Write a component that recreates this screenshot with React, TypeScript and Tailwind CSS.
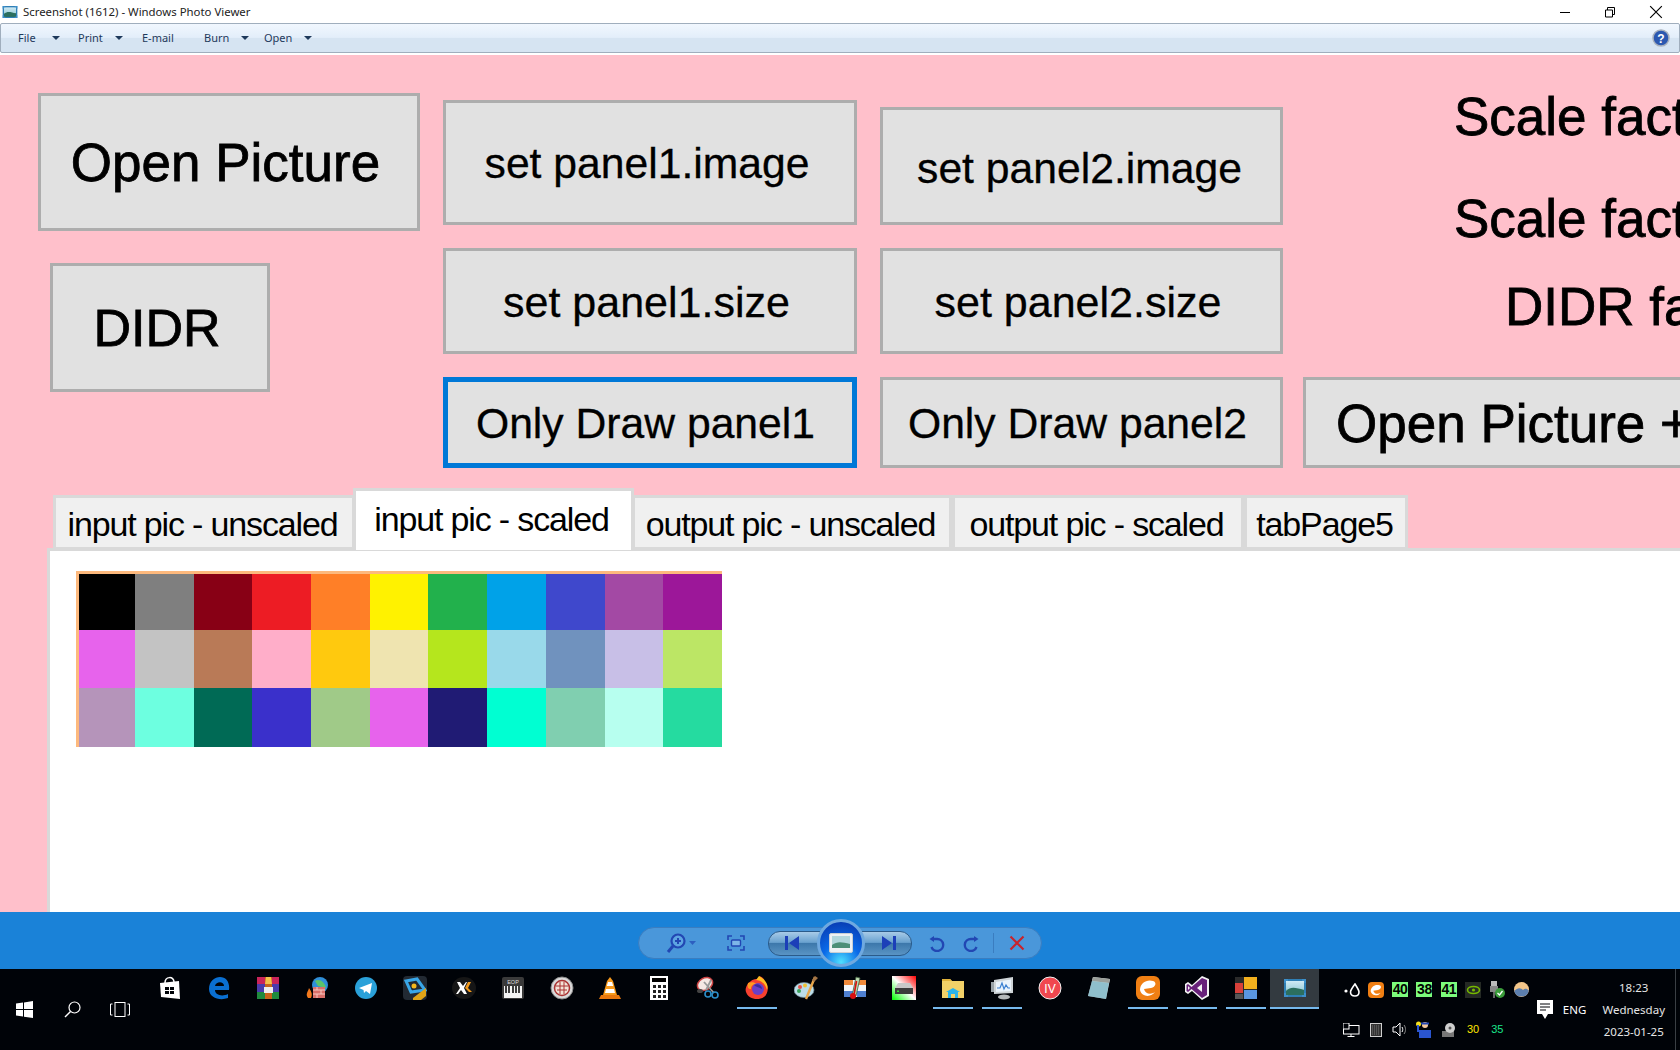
import React from "react";

const winFont = "font-['Noto_Sans','Open_Sans',sans-serif]";
const btnCore =
  "flex items-center justify-center shrink-0 bg-[#e1e1e1] text-black font-['Liberation_Sans',sans-serif] leading-none whitespace-nowrap";
const btnBase = `${btnCore} border-[3px] border-[#adadad]`;
const strokeBig = "[-webkit-text-stroke:0.8px_black]";
const strokeMid = "[-webkit-text-stroke:0.3px_black]";

const colors = [
  ["#000000", "#7f7f7f", "#880015", "#ed1c24", "#ff7f27", "#fff200", "#22b14c", "#00a2e8", "#3f48cc", "#a349a4", "#9c1799"],
  ["#e763ec", "#c3c3c3", "#b97a57", "#ffaec9", "#ffc90e", "#efe4b0", "#b5e61d", "#99d9ea", "#7092be", "#c8bfe7", "#bce665"],
  ["#b594ba", "#6dffe0", "#006a55", "#3a30cb", "#a0ca88", "#e763ec", "#201b74", "#00ffd2", "#80cfb0", "#b7ffef", "#25dba0"],
];

function PhotoIcon({ s = 16 }: { s?: number }) {
  return (
    <svg width={s} height={s} viewBox="0 0 24 24">
      <defs>
        <linearGradient id="sky" x1="0" y1="0" x2="0" y2="1">
          <stop offset="0" stopColor="#cfeaf5" />
          <stop offset="0.55" stopColor="#a8d5e0" />
          <stop offset="1" stopColor="#1f6a5c" />
        </linearGradient>
      </defs>
      <rect x="1" y="3" width="22" height="18" fill="#2f7fb5" />
      <rect x="3" y="5" width="18" height="14" fill="url(#sky)" />
      <path d="M3 15 C8 10 13 12 21 14 V19 H3Z" fill="#2c6f5f" />
      <path d="M1 3h4v2H3v2H1zM19 3h4v4h-2V5h-2zM1 17h2v2h2v2H1zM21 17h2v4h-4v-2h2z" fill="#3d8fc9" />
    </svg>
  );
}

const tile = (children: React.ReactNode, s = 24) => (
  <svg width={s} height={s} viewBox="0 0 24 24">
    {children}
  </svg>
);

const taskIcons: { icon: React.ReactNode; line?: boolean; active?: boolean }[] = [
  {
    icon: tile(
      <>
        <path d="M2 7 L21 5 L22 23 L3 21Z" fill="#fff" />
        <path d="M7 7 C7 0 16 0 16 6" fill="none" stroke="#fff" strokeWidth="1.5" />
        <path d="M7 11h4v3H7zM12 11h4v3h-4zM7 15h4v3H7zM12 15h4v3h-4z" fill="#000308" />
      </>
    ),
  },
  {
    icon: tile(
      <path
        d="M2 13 C2 5 8 1 13 1 C19 1 23 6 22 14 H8 C8 19 15 21 21 18 V22 C13 25 2 22 2 13Z M8 10 H17 C17 5 9 5 8 10Z"
        fill="#0a6fd1"
        fillRule="evenodd"
      />
    ),
  },
  {
    icon: tile(
      <>
        <rect x="1" y="1" width="22" height="7" fill="#c9245a" />
        <rect x="1" y="8" width="22" height="8" fill="#4a3bad" />
        <rect x="1" y="16" width="22" height="7" fill="#1f8a3e" />
        <rect x="9" y="1" width="7" height="22" fill="#c8641a" />
        <rect x="8" y="11" width="9" height="6" fill="#eee" />
        <path d="M10 1h5l1 7H9z" fill="#f2c14a" />
      </>
    ),
  },
  {
    icon: tile(
      <>
        <circle cx="15" cy="9" r="8" fill="#2f8fd8" />
        <path d="M10 5 C14 2 20 6 21 12 L13 10Z" fill="#5bc36a" />
        <rect x="8" y="11" width="12" height="11" fill="#d9706a" />
        <path d="M8 14h12M8 18h12M12 11v3M16 14v4M12 18v4" stroke="#f5c7c0" strokeWidth="1" />
        <path d="M3 22 C0 18 3 16 4 12 C6 15 8 18 6 22Z" fill="#f2791c" />
      </>
    ),
  },
  {
    icon: tile(
      <>
        <circle cx="12" cy="12" r="11" fill="#2aa1d9" />
        <path d="M5 12 L18 7 L16 18 L12 15 L10 17 L9.5 14Z" fill="#fff" />
      </>
    ),
  },
  {
    icon: tile(
      <>
        <rect x="0" y="0" width="24" height="24" rx="4" fill="#222a33" />
        <path d="M3 5 L14 3 L22 14 L8 16Z" fill="none" stroke="#39a7e8" strokeWidth="3" />
        <circle cx="11" cy="10" r="2.5" fill="#f5b81c" />
        <path d="M10 22 L23 12 V20 L18 24H10Z" fill="#e0a417" />
      </>
    ),
  },
  {
    icon: tile(
      <>
        <ellipse cx="12" cy="12" rx="12" ry="11" fill="#161616" />
        <path d="M5 6h3l3 4 3-4h1l-3 6 3 6h-3l-3-4-3 4H4l4-6z" fill="#fff" />
        <path d="M16 6h3l-3 6 4 4h-3l-4-4z" fill="#f29a1d" />
      </>
    ),
  },
  {
    icon: tile(
      <>
        <rect x="1" y="1" width="22" height="22" rx="2" fill="#3a3a3a" />
        <rect x="3" y="10" width="18" height="12" fill="#f5f5f5" />
        <path d="M5 10v7M8 10v7M12 10v7M15 10v7M18 10v7" stroke="#111" strokeWidth="1.6" />
        <text x="12" y="8" fontSize="5.5" fill="#ddd" textAnchor="middle" fontFamily="Liberation Sans">EOP</text>
      </>
    ),
  },
  {
    icon: tile(
      <>
        <circle cx="12" cy="12" r="11" fill="#d9d9d9" stroke="#8a8a8a" />
        <circle cx="12" cy="12" r="7.5" fill="#f3e3d7" stroke="#a33" strokeWidth="1.5" />
        <path d="M6 10h12M7 14h10M10 6v12M14 6v12" stroke="#a33" />
      </>
    ),
  },
  {
    icon: tile(
      <>
        <path d="M12 1 L15 5 L19 19 H5 L9 5Z" fill="#f79a1c" />
        <path d="M10 6h4l1.2 4H8.8zM8 13h8l1 4H7z" fill="#fff" />
        <path d="M3 19h18l2 4H1z" fill="#e9780e" />
      </>
    ),
  },
  {
    icon: tile(
      <>
        <rect x="3" y="0" width="18" height="24" fill="#fff" />
        <rect x="5" y="2" width="14" height="4" fill="#000" />
        <path d="M6 9h3v3H6zM11 9h3v3h-3zM16 9h3v3h-3zM6 14h3v3H6zM11 14h3v3h-3zM16 14h3v3h-3zM6 19h3v3H6zM11 19h3v3h-3zM16 19h3v3h-3z" fill="#222" />
      </>
    ),
  },
  {
    icon: tile(
      <>
        <ellipse cx="9" cy="8" rx="8" ry="6" fill="#f4e8e4" stroke="#c44" strokeWidth="1.5" transform="rotate(-30 9 8)" />
        <path d="M8 6 L18 17M15 4 L10 14" stroke="#999" strokeWidth="1.8" />
        <circle cx="19" cy="19" r="3" fill="none" stroke="#2b8fc9" strokeWidth="1.6" />
        <circle cx="12" cy="18" r="3" fill="none" stroke="#2b8fc9" strokeWidth="1.6" />
        <ellipse cx="4" cy="15" rx="3" ry="2" fill="#444" />
      </>
    ),
  },
  {
    icon: tile(
      <>
        <path d="M6 5 C1 8 0 14 1 16 C3 23 13 25 19 21 C24 17 24 8 19 5 C19 2 17 1 14 0 C16 3 14 4 11 3 C9 3 7 4 6 5Z" fill="#f6402f" />
        <path d="M14 0 C20 3 24 9 22 14 C20 6 14 4 11 4Z" fill="#ffbc22" />
        <path d="M3 7 C2 11 3 13 6 13 C6 9 9 8 12 8 C9 6 6 6 3 7Z" fill="#ff9a1f" />
        <circle cx="13" cy="13" r="6" fill="#6a3fc7" />
        <path d="M9 9 C12 7 17 9 17 13 C13 11 11 11 9 9Z" fill="#3c2a9e" />
      </>
    ),
    line: true,
  },
  {
    icon: tile(
      <>
        <ellipse cx="10" cy="14" rx="10" ry="7.5" fill="#bcdde8" stroke="#6e8b96" strokeWidth="0.7" />
        <circle cx="6" cy="11" r="2" fill="#e5534b" />
        <circle cx="5" cy="15" r="2" fill="#3aa35b" />
        <circle cx="11" cy="9.5" r="2" fill="#f1c232" />
        <path d="M21 1 L12 23" stroke="#e8a64a" strokeWidth="2.4" />
        <path d="M21 0 L24 2 L20 6 L18 4Z" fill="#a37546" />
      </>
    ),
  },
  {
    icon: tile(
      <>
        <rect x="1" y="4" width="22" height="17" rx="2" fill="#f1f5fa" />
        <rect x="1" y="4" width="9" height="5" fill="#ef8a3c" />
        <rect x="14" y="4" width="9" height="5" fill="#ef8a3c" />
        <rect x="1" y="15" width="9" height="6" fill="#4e7fd0" />
        <rect x="14" y="15" width="9" height="6" fill="#4e7fd0" />
        <path d="M13 1 L17 2 L13 20 L9 20Z" fill="#bcd9b0" stroke="#3b5a3b" strokeWidth="0.8" />
        <circle cx="10" cy="20" r="3" fill="#d80f0f" />
        <path d="M13.5 5 L11 19" stroke="#d80f0f" strokeWidth="1.6" />
      </>
    ),
  },
  {
    icon: (
      <svg width="24" height="24" viewBox="0 0 24 24">
        <defs>
          <linearGradient id="hd" x1="0" y1="1" x2="1" y2="0">
            <stop offset="0" stopColor="#0f0" />
            <stop offset="0.5" stopColor="#fff" />
            <stop offset="1" stopColor="#f00" />
          </linearGradient>
        </defs>
        <rect width="24" height="24" fill="url(#hd)" />
        <path d="M6 7h12l3 5H3z" fill="#c8c8c8" />
        <rect x="3" y="12" width="18" height="6" fill="#3c3c3c" />
        <rect x="5" y="14.5" width="2" height="1.5" fill="#3cdc3c" />
      </svg>
    ),
  },
  {
    icon: tile(
      <>
        <path d="M1 3h8l2 2h12v17H1z" fill="#f2d168" />
        <path d="M1 3h8l2 2H1z" fill="#e0b23a" />
        <path d="M7 22v-6h-2l7-4 7 4h-2v6h-3v-4h-4v4z" fill="#2ab3ea" />
      </>
    ),
    line: true,
  },
  {
    icon: tile(
      <>
        <path d="M1 6 L4 6 V16 H1Z" fill="#9aa3a8" />
        <path d="M4 4 L23 1 V17 L4 18Z" fill="#cfd5d8" />
        <path d="M6 6 L21 3.5 V15 L6 16Z" fill="#eaf3fb" />
        <path d="M7 12 L10 12 L12 7 L14 13 L16 9 L18 12 L20 12" fill="none" stroke="#3a7fd0" strokeWidth="1.2" />
        <ellipse cx="14" cy="21" rx="6" ry="2.5" fill="#b5b9bb" />
      </>
    ),
    line: true,
  },
  {
    icon: tile(
      <>
        <circle cx="12" cy="12" r="11" fill="#f0474f" stroke="#f3f3f3" strokeWidth="1" />
        <text x="12" y="16.5" fontSize="12" fill="#fff" textAnchor="middle" fontFamily="Liberation Sans">IV</text>
      </>
    ),
  },
  {
    icon: tile(
      <>
        <path d="M6 1 L23 3 L19 23 L1 20Z" fill="#e8eef0" />
        <path d="M6 1 L23 3 L22 7 L5 5Z" fill="#9a9f9a" />
        <path d="M5 5 L22 7 L19 23 L1 20Z" fill="#5fa6b8" opacity="0.65" />
      </>
    ),
  },
  {
    icon: tile(
      <>
        <rect x="0" y="0" width="24" height="24" rx="6" fill="#f07f13" />
        <path d="M4 14 C4 7 11 3 17 5 C21 6 20 11 15 12 L8 13 C9 18 15 19 19 16 C16 21 6 22 4 14Z" fill="#fff" />
      </>
    ),
    line: true,
  },
  {
    icon: tile(
      <>
        <path d="M17 0 L24 3 V20 L17 24 L7 15 L3 18 L0 16 V8 L3 6 L7 9Z" fill="#f3f3f3" />
        <path d="M17 2 L22 4 V19 L17 22 L6.5 13 L3 16 L1.5 15 V9 L3 8 L6.5 11Z" fill="#68217a" />
        <path d="M17 8 V16 L12 12Z" fill="#f3f3f3" />
        <path d="M3 10 V14 L5 12Z" fill="#f3f3f3" />
      </>
    ),
    line: true,
  },
  {
    icon: tile(
      <>
        <rect x="1" y="1" width="22" height="22" fill="#2a2a2a" />
        <rect x="10" y="1" width="13" height="12" fill="#f2b01e" />
        <rect x="10" y="14" width="13" height="9" fill="#5a96e0" />
        <rect x="1" y="7" width="8" height="10" fill="#d8403a" />
        <rect x="1" y="18" width="8" height="5" fill="#555" />
      </>
    ),
    line: true,
  },
  { icon: <PhotoIcon s={24} />, line: true, active: true },
];

const tabText = "flex items-start justify-center text-[34px] leading-[34px] tracking-[-1.15px] whitespace-nowrap text-black font-['Liberation_Sans',sans-serif]";

const Tab = ({ label, w, active }: { label: string; w: string; active?: boolean }) => (
  <div
    className={
      active
        ? `${w} h-[62px] -ml-[2px] -mr-[2px] z-10 bg-white border-[3px] border-b-0 border-[#d9d9d9] pt-[11px] pr-[4px] ${tabText}`
        : `${w} h-[55px] bg-[#f0f0f0] border-[3px] border-[#d9d9d9] pt-[9px] pr-[3px] ${tabText}`
    }
  >
    {label}
  </div>
);

const Arrow = () => <span className="w-0 h-0 border-l-[4px] border-r-[4px] border-t-[4px] border-l-transparent border-r-transparent border-t-[#1e395b]" />;

const TrayNum = ({ n }: { n: string }) => (
  <span className="w-[16px] h-[15px] bg-[#7cfb7c] text-black text-[14px] leading-[15px] text-center font-bold font-['Liberation_Sans',sans-serif] tracking-[-0.5px]">{n}</span>
);

const TrayCell = ({ children }: { children: React.ReactNode }) => (
  <div className="w-[24.3px] h-[40px] flex items-center justify-center">{children}</div>
);

export default function App() {
  return (
    <div className="w-[1680px] h-[1050px] overflow-hidden flex flex-col bg-white">
      {/* Title bar */}
      <div className={`h-[23px] shrink-0 flex items-center bg-white text-black text-[11.4px] ${winFont}`}>
        <span className="ml-[2px] mr-[5px] flex"><PhotoIcon s={16} /></span>
        <span className="text-[#222]">Screenshot (1612) - Windows Photo Viewer</span>
        <div className="ml-auto flex items-center mr-[17px]">
          <svg width="12" height="12" viewBox="0 0 12 12"><path d="M1 6.5h10" stroke="#000" /></svg>
          <svg className="ml-[33px]" width="12" height="12" viewBox="0 0 12 12"><path d="M1.5 4h7v7h-7zM3.5 4V1.5h7v7H8.5" fill="none" stroke="#000" /></svg>
          <svg className="ml-[33px]" width="14" height="14" viewBox="0 0 12 12"><path d="M1 1l10 10M11 1L1 11" stroke="#000" /></svg>
        </div>
      </div>
      {/* Menu bar */}
      <div className={`h-[30px] shrink-0 flex items-center rounded-[2px] border border-[#a0aebd] bg-[linear-gradient(#f1f7fe_0%,#e3eefa_48%,#d6e4f2_50%,#d6e4f2_100%)] text-[11px] text-[#1e395b] pl-[17px] pr-[9px] ${winFont}`}>
        <span className="w-[19px]">File</span>
        <span className="ml-[15px] flex"><Arrow /></span>
        <span className="ml-[18px] w-[26px]">Print</span>
        <span className="ml-[11px] flex"><Arrow /></span>
        <span className="ml-[19px] w-[33px]">E-mail</span>
        <span className="ml-[29px] w-[25px]">Burn</span>
        <span className="ml-[12px] flex"><Arrow /></span>
        <span className="ml-[15px] w-[28px]">Open</span>
        <span className="ml-[12px] flex"><Arrow /></span>
        <svg className="ml-auto" width="18" height="18" viewBox="0 0 18 18">
          <circle cx="9" cy="9" r="8" fill="#2c58b0" stroke="#a9b1bd" strokeWidth="1.5" />
          <text x="9" y="13.5" fontSize="12" fontWeight="bold" fill="#fff" textAnchor="middle" fontFamily="Liberation Sans">?</text>
        </svg>
      </div>
      <div className="h-[2px] shrink-0 bg-white" />

      {/* Pink application surface */}
      <div className="h-[857px] shrink-0 bg-[#ffc0cb] overflow-hidden flex flex-col">
        <div className="h-[434px] shrink-0 flex">
          <div className="ml-[38px] pt-[38px] w-[382px] shrink-0 flex flex-col">
            <div className={`${btnBase} ${strokeBig} w-[382px] h-[138px] text-[53px] pr-[7px]`}>Open Picture</div>
            <div className={`${btnBase} ${strokeBig} ml-[12px] mt-[32px] w-[220px] h-[129px] text-[52px] pr-[6px]`}>DIDR</div>
          </div>
          <div className="ml-[23px] pt-[45px] w-[414px] shrink-0 flex flex-col gap-[23px]">
            <div className={`${btnBase} ${strokeMid} h-[125px] text-[42.67px] pr-[6px] pt-[2px]`}>set panel1.image</div>
            <div className={`${btnBase} ${strokeMid} h-[106px] text-[43px] pr-[7px] pt-[3px]`}>set panel1.size</div>
            <div className={`${btnCore} ${strokeMid} border-[5px] border-[#0078d7] h-[91px] text-[42.67px] pr-[9px] pt-[2px]`}>Only Draw panel1</div>
          </div>
          <div className="ml-[23px] pt-[52px] w-[403px] shrink-0 flex flex-col gap-[23px]">
            <div className={`${btnBase} ${strokeMid} h-[118px] text-[42.67px] pr-[4px] pt-[4px]`}>set panel2.image</div>
            <div className={`${btnBase} ${strokeMid} h-[106px] text-[43px] pr-[7px] pt-[3px]`}>set panel2.size</div>
            <div className={`${btnBase} ${strokeMid} h-[91px] text-[42.67px] pr-[8px] pt-[2px]`}>Only Draw panel2</div>
          </div>
          <div className={`ml-[20px] w-[520px] shrink-0 flex flex-col font-['Liberation_Sans',sans-serif] text-black text-[53px] leading-[53px] whitespace-nowrap ${strokeBig}`}>
            <div className="mt-[35px] ml-[151px]">Scale fact</div>
            <div className="mt-[49px] ml-[151px]">Scale fact</div>
            <div className="mt-[35px] ml-[202px]">DIDR fa</div>
            <div className={`${btnBase} mt-[44px] h-[91px] w-[520px] text-[53px] !justify-start pl-[30px] pt-[2px]`}>Open Picture +</div>
          </div>
        </div>
        <div className="ml-[53px] flex items-end h-[61px] shrink-0 relative z-10 -mb-[2px]">
          <Tab label="input pic - unscaled" w="w-[302px]" />
          <Tab label="input pic - scaled" w="w-[281px]" active />
          <Tab label="output pic - unscaled" w="w-[320px]" />
          <Tab label="output pic - scaled" w="w-[292px]" />
          <Tab label="tabPage5" w="w-[164px]" />
        </div>
        <div className="ml-[47px] flex-1 bg-white border-l-[3px] border-t-[3px] border-[#d9d9d9] pl-[26px] pt-[20px]">
          <div className="inline-block border-l-[3px] border-t-[3px] border-[#fdb97d]">
            {colors.map((row, r) => (
              <div key={r} className={`grid grid-cols-[56px_59px_58px_59px_59px_58px_59px_59px_59px_58px_59px] ${r === 0 ? "h-[56px]" : r === 1 ? "h-[58px]" : "h-[59px]"}`}>
                {row.map((c, i) => (
                  <div key={i} style={{ backgroundColor: c }} />
                ))}
              </div>
            ))}
          </div>
        </div>
      </div>

      {/* Photo Viewer controls */}
      <div className="h-[57px] shrink-0 bg-[#1a82d8] flex items-start justify-center pt-[15px]">
        <div className="w-[404px] h-[32px] rounded-full bg-[#4a97da] border border-[#3a7dc0] flex items-center relative">
          <svg className="ml-[27px]" width="30" height="22" viewBox="0 0 30 22">
            <circle cx="12" cy="9" r="6.5" fill="#5da5e2" stroke="#2247b3" strokeWidth="2.2" />
            <path d="M9 9h6M12 6v6" stroke="#2247b3" strokeWidth="2" />
            <path d="M7 14 L2 20" stroke="#2247b3" strokeWidth="3" />
            <path d="M23 9h7l-3.5 4z" fill="#2d5fc0" />
          </svg>
          <svg className="ml-[31px]" width="18" height="16" viewBox="0 0 18 16">
            <path d="M1 5V1h4M13 1h4v4M17 11v4h-4M5 15H1v-4" fill="none" stroke="#2247b3" strokeWidth="1.6" />
            <rect x="4.5" y="5" width="9" height="6" rx="1" fill="#7db6e8" stroke="#2247b3" strokeWidth="1.4" />
          </svg>
          <div className="ml-[23px] w-[54px] h-[25px] -mr-[5px] rounded-l-[12px] border border-[#2b5b8a] bg-[linear-gradient(#a8cbe8_0%,#6aa2cf_45%,#3d78ab_50%,#5a94c4_100%)] flex items-center justify-center pr-[6px]">
            <svg width="16" height="14" viewBox="0 0 16 14"><path d="M1 0h3v14H1zM15 0v14L5 7z" fill="#1c3fb8" /></svg>
          </div>
          <div className="relative z-10 w-[48px] h-[48px] shrink-0 rounded-full border-[3px] border-[#6fa9e0] bg-[radial-gradient(circle_at_50%_95%,#4fe0ff_0%,#0a6ae8_42%,#0832a8_100%)] flex items-center justify-center">
            <svg width="24" height="20" viewBox="0 0 24 20">
              <rect x="0.5" y="0.5" width="23" height="19" rx="1.5" fill="#eef1f4" stroke="#c9ced3" />
              <rect x="3" y="3" width="18" height="12" fill="#b3d7dc" />
              <path d="M3 12 C8 8 13 9 21 11 V15 H3Z" fill="#4d8f78" />
            </svg>
          </div>
          <div className="w-[52px] h-[25px] -ml-[5px] rounded-r-[12px] border border-[#2b5b8a] bg-[linear-gradient(#a8cbe8_0%,#6aa2cf_45%,#3d78ab_50%,#5a94c4_100%)] flex items-center justify-center pl-[6px]">
            <svg width="16" height="14" viewBox="0 0 16 14"><path d="M15 0h-3v14h3zM1 0v14l10-7z" fill="#1c3fb8" /></svg>
          </div>
          <svg className="ml-[17px]" width="17" height="18" viewBox="0 0 17 18">
            <path d="M5 2 L5 8 L0.5 5Z" fill="#2247b3" />
            <path d="M5 5 H8 A6 6 0 1 1 2.5 13" fill="none" stroke="#2247b3" strokeWidth="2.4" />
          </svg>
          <svg className="ml-[16px]" width="17" height="18" viewBox="0 0 17 18">
            <path d="M12 2 L12 8 L16.5 5Z" fill="#2247b3" />
            <path d="M12 5 H9 A6 6 0 1 0 14.5 13" fill="none" stroke="#2247b3" strokeWidth="2.4" />
          </svg>
          <span className="ml-[14px] w-px h-[20px] bg-[#3a7dc0]" />
          <svg className="ml-[15px]" width="16" height="16" viewBox="0 0 16 16">
            <path d="M1.5 1.5l13 13M14.5 1.5l-13 13" stroke="#c8232c" strokeWidth="2.2" />
          </svg>
        </div>
      </div>

      {/* Taskbar */}
      <div className="flex-1 bg-[#000308] flex items-center">
        <div className="w-[146px] shrink-0 flex items-center">
          <div className="w-[48px] flex justify-center">
            <svg width="17" height="17" viewBox="0 0 17 17"><path d="M0 2.5L7 1.5V8H0zM8 1.4L17 0V8H8zM0 9h7v6.5L0 14.5zM8 9h9v8l-9-1.3z" fill="#fff" /></svg>
          </div>
          <div className="w-[48px] flex justify-center">
            <svg width="17" height="17" viewBox="0 0 17 17"><circle cx="10.5" cy="6.5" r="5.5" fill="none" stroke="#fff" strokeWidth="1.2" /><path d="M6.5 10.5L1 16" stroke="#fff" strokeWidth="1.4" /></svg>
          </div>
          <div className="w-[48px] flex justify-center">
            <svg width="20" height="15" viewBox="0 0 20 15"><rect x="5" y="0.5" width="10" height="14" fill="none" stroke="#fff" /><path d="M2.5 2H0.5v11h2M17.5 2h2v11h-2" fill="none" stroke="#fff" /></svg>
          </div>
        </div>
        <div className="self-start flex shrink-0">
          {taskIcons.map((t, i) => (
            <div key={i} className={`w-[48.9px] h-[40px] flex flex-col items-center ${t.active ? "bg-[#333a40]" : ""}`}>
              <div className="h-[38px] flex items-center justify-center">{t.icon}</div>
              {t.line && <div className={`h-[2px] bg-[#76b9ed] ${t.active ? "w-full" : "w-[40px]"}`} />}
            </div>
          ))}
        </div>
        <div className="ml-[20px] shrink-0 flex flex-col">
          <div className="flex">
            <TrayCell>
              <svg width="16" height="14" viewBox="0 0 16 14"><circle cx="2" cy="8" r="1.6" fill="#fff" /><path d="M11 1 C8 5 6.5 7 6.5 9 C6.5 12 9 13 11 13 C13 13 15 12 15 9 C15 7 13.5 5 11 1Z" fill="none" stroke="#fff" strokeWidth="1.6" /></svg>
            </TrayCell>
            <TrayCell>
              <svg width="16" height="16" viewBox="0 0 24 24"><rect width="24" height="24" rx="6" fill="#f07f13" /><path d="M4 14 C4 7 11 3 17 5 C21 6 20 11 15 12 L8 13 C9 18 15 19 19 16 C16 21 6 22 4 14Z" fill="#fff" /></svg>
            </TrayCell>
            <TrayCell><TrayNum n="40" /></TrayCell>
            <TrayCell><TrayNum n="38" /></TrayCell>
            <TrayCell><TrayNum n="41" /></TrayCell>
            <TrayCell>
              <svg width="16" height="16" viewBox="0 0 16 16"><rect width="16" height="16" fill="#252a25" /><ellipse cx="8.5" cy="8" rx="6" ry="3.5" fill="none" stroke="#76b900" strokeWidth="1.6" /><circle cx="8.5" cy="8" r="1.6" fill="#76b900" /></svg>
            </TrayCell>
            <TrayCell>
              <svg width="16" height="17" viewBox="0 0 16 17"><rect x="2" y="0" width="6" height="5" fill="#bbb" /><rect x="1" y="5" width="8" height="6" fill="#888" /><rect x="4" y="11" width="2" height="6" fill="#666" /><circle cx="11" cy="12" r="5" fill="#3a9c3a" /><path d="M8.5 12l2 2 3-4" fill="none" stroke="#fff" strokeWidth="1.3" /></svg>
            </TrayCell>
            <TrayCell>
              <svg width="15" height="15" viewBox="0 0 15 15"><circle cx="7.5" cy="7.5" r="7.5" fill="#f3c68a" /><path d="M0.2 9 C4 5 7 6 9 8 C11 6 13 6.5 14.8 8.5 A7.5 7.5 0 0 1 0.2 9Z" fill="#5c7fae" /></svg>
            </TrayCell>
          </div>
          <div className="flex">
            <TrayCell>
              <svg width="17" height="14" viewBox="0 0 17 14"><rect x="0.5" y="2.5" width="15.5" height="8.5" fill="none" stroke="#fff" /><rect x="0" y="0" width="6" height="6" fill="#000308" stroke="#fff" /><path d="M8 11v2.5M4.5 13.5h7" stroke="#fff" /></svg>
            </TrayCell>
            <TrayCell>
              <svg width="12" height="14" viewBox="0 0 12 14"><rect x="0.5" y="0.5" width="11" height="13" fill="#333" stroke="#cfcfcf" /><path d="M2 3h8M2 5h8M2 7h8M2 9h8M2 11h8" stroke="#777" strokeDasharray="1 1" /></svg>
            </TrayCell>
            <TrayCell>
              <svg width="16" height="15" viewBox="0 0 16 15"><path d="M1 5h3l4-4v13l-4-4H1z" fill="none" stroke="#fff" /><path d="M10 5c1 1.5 1 3.5 0 5" fill="none" stroke="#fff" /><path d="M12 3c2 2.5 2 6.5 0 9" fill="none" stroke="#888" /></svg>
            </TrayCell>
            <TrayCell>
              <svg width="16" height="17" viewBox="0 0 16 17"><circle cx="2.5" cy="3" r="2.5" fill="#f5e11c" /><circle cx="9" cy="4" r="3" fill="#f4c9a0" /><path d="M5 1.5h8v2H5z" fill="#2247b3" /><path d="M3 9h12v8H3z" fill="#2a55d0" /><path d="M2 4v7" stroke="#2a55d0" strokeWidth="2" /></svg>
            </TrayCell>
            <TrayCell>
              <svg width="14" height="14" viewBox="0 0 14 14"><rect x="0" y="8" width="12" height="6" fill="#777" /><circle cx="8" cy="5" r="5" fill="#cfcfcf" /><circle cx="8" cy="5" r="1.5" fill="#555" /></svg>
            </TrayCell>
            <TrayCell><span className="text-[#ffe600] text-[11px] font-['Liberation_Sans',sans-serif]">30</span></TrayCell>
            <TrayCell><span className="text-[#19e68c] text-[11px] font-['Liberation_Sans',sans-serif]">35</span></TrayCell>
          </div>
        </div>
        <div className={`flex items-center text-white text-[11.5px] ${winFont}`}>
          <svg className="ml-[3px]" width="16" height="19" viewBox="0 0 16 19"><path d="M0 0h16v14h-5l-3 5-3-5H0z" fill="#fff" /><path d="M3 4h10M3 7h10M3 10h6" stroke="#000308" /></svg>
          <span className="ml-[10px] w-[24px]">ENG</span>
          <div className="ml-[9px] w-[76px] flex flex-col items-center gap-[4px] leading-[18px] text-[#e6e6e6]">
            <span>18:23</span>
            <span>Wednesday</span>
            <span>2023-01-25</span>
          </div>
          <span className="ml-[3px] w-px h-[81px] bg-[#3a3f44]" />
        </div>
      </div>
    </div>
  );
}
